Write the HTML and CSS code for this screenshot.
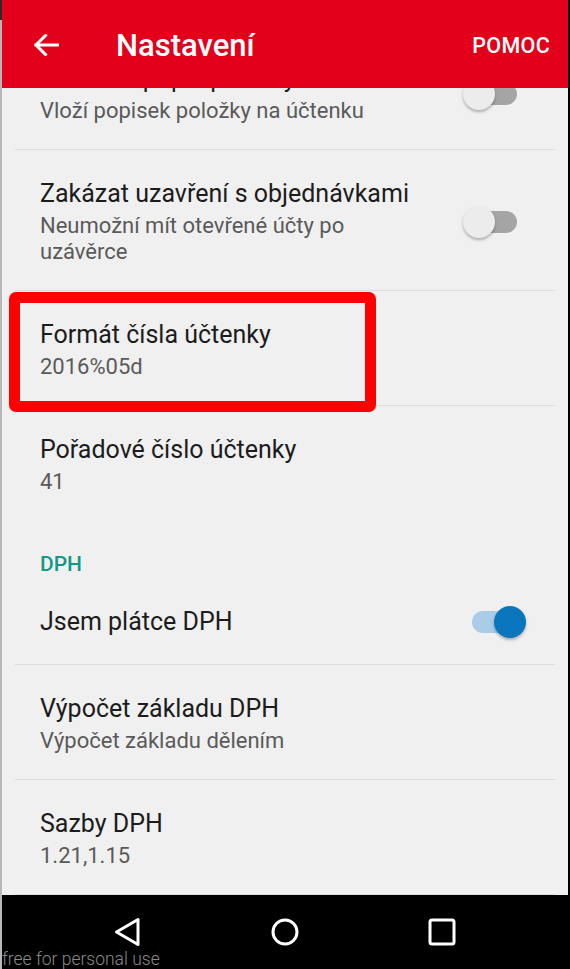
FILE: index.html
```html
<!DOCTYPE html>
<html lang="cs">
<head>
    <meta charset="UTF-8">
    <meta name="viewport" content="width=device-width, initial-scale=1.0">
    <title>Nastavení</title>
    <link rel="stylesheet" href="styles.css">
</head>
<body>
    <div class="screen">
        <div class="edge-left"></div>
        <div class="phone">
            <div class="appbar">
                <svg class="back" width="26" height="22" viewBox="0 0 26 22">
                    <path d="M3 11 H25 M12.5 1.5 L3 11 L12.5 20.5" fill="none" stroke="#fff" stroke-width="3" stroke-linecap="square"/>
                </svg>
                <div class="title">Nastavení</div>
                <div class="action">POMOC</div>
            </div>

            <div class="content">
                <div class="list">
                    <div class="pref">
                        <div class="pref-text">
                            <div class="pref-title">Tisknout popis položky v účtence</div>
                            <div class="pref-summary">Vloží popisek položky na účtenku</div>
                        </div>
                        <div class="switch"><div class="switch-track"></div><div class="switch-thumb"></div></div>
                    </div>
                    <div class="pref">
                        <div class="pref-text">
                            <div class="pref-title">Zakázat uzavření s objednávkami</div>
                            <div class="pref-summary">Neumožní mít otevřené účty po uzávěrce</div>
                        </div>
                        <div class="switch"><div class="switch-track"></div><div class="switch-thumb"></div></div>
                    </div>
                    <div class="pref">
                        <div class="pref-text">
                            <div class="pref-title">Formát čísla účtenky</div>
                            <div class="pref-summary">2016%05d</div>
                        </div>
                        <div class="highlight"></div>
                    </div>
                    <div class="pref group-end">
                        <div class="pref-text">
                            <div class="pref-title">Pořadové číslo účtenky</div>
                            <div class="pref-summary">41</div>
                        </div>
                    </div>

                    <div class="category">DPH</div>

                    <div class="pref single">
                        <div class="pref-text">
                            <div class="pref-title">Jsem plátce DPH</div>
                        </div>
                        <div class="switch on"><div class="switch-track"></div><div class="switch-thumb"></div></div>
                    </div>
                    <div class="pref">
                        <div class="pref-text">
                            <div class="pref-title">Výpočet základu DPH</div>
                            <div class="pref-summary">Výpočet základu dělením</div>
                        </div>
                    </div>
                    <div class="pref">
                        <div class="pref-text">
                            <div class="pref-title">Sazby DPH</div>
                            <div class="pref-summary">1.21,1.15</div>
                        </div>
                    </div>
                </div>
            </div>

            <div class="navbar">
                <svg class="nav-icon" width="40" height="40" viewBox="0 0 40 40">
                    <path d="M8.5 20 L30 7.5 V32.5 Z" fill="none" stroke="#fff" stroke-width="3" stroke-linejoin="round"/>
                </svg>
                <svg class="nav-icon" width="40" height="40" viewBox="0 0 40 40">
                    <circle cx="20" cy="20" r="12" fill="none" stroke="#fff" stroke-width="3"/>
                </svg>
                <svg class="nav-icon" width="40" height="40" viewBox="0 0 40 40">
                    <rect x="8" y="8" width="24" height="24" rx="2" fill="none" stroke="#fff" stroke-width="3"/>
                </svg>
                <div class="watermark">free for personal use</div>
            </div>
        </div>
        <div class="edge-right"></div>
    </div>
</body>
</html>
```

FILE: styles.css
```css
body {
    margin: 0;
    width: 570px;
    height: 969px;
    overflow: hidden;
    font-family: Roboto, "Noto Sans", sans-serif;
}
.screen {
    display: flex;
    height: 969px;
}
.edge-left {
    width: 2px;
    background: linear-gradient(#2a2a2a 0 20px, #b8b8b8 20px);
}
.edge-right {
    width: 2px;
    background: #000;
}
.phone {
    flex: 1;
    min-width: 0;
    display: flex;
    flex-direction: column;
}
.appbar {
    height: 88px;
    flex-shrink: 0;
    display: flex;
    align-items: center;
    padding: 0 18px 0 31px;
    background: #e2001a;
    color: #fff;
}
.back {
    flex-shrink: 0;
    margin-top: 2px;
}
.title {
    flex: 1;
    margin-left: 57px;
    font-size: 31px;
    font-weight: 500;
    margin-top: 2px;
}
.action {
    font-size: 21.5px;
    font-weight: 500;
    letter-spacing: 0.3px;
    margin-top: 2px;
}
.content {
    flex: 1;
    overflow: hidden;
    padding: 0 13px;
    background: #f0f0f0;
}
.list {
    margin-top: -53px;
}
.pref {
    position: relative;
    display: flex;
    align-items: center;
    padding: 29px 29px 25px 25px;
    border-bottom: 1px solid #dcdcdc;
}
.pref.single {
    padding: 26px 29px 26px 25px;
}
.pref.group-end {
    padding-bottom: 26px;
    border-bottom: none;
}
.pref-text {
    flex: 1;
    min-width: 0;
}
.pref-title {
    font-size: 25px;
    line-height: 30px;
    color: #1c1c1c;
    white-space: nowrap;
}
.pref-summary {
    margin-top: 4px;
    font-size: 22px;
    line-height: 26px;
    color: #5a5a5a;
}
.category {
    padding: 32px 25px 5px;
    font-size: 21px;
    line-height: 22px;
    font-weight: 500;
    color: #12998a;
}
.switch {
    position: relative;
    flex-shrink: 0;
    width: 63px;
    height: 32px;
    margin-left: 43px;
}
.switch-track {
    position: absolute;
    left: 9px;
    right: 9px;
    top: 5px;
    height: 22px;
    border-radius: 11px;
    background: #a5a5a5;
}
.switch-thumb {
    position: absolute;
    top: 0;
    left: 0;
    width: 32px;
    height: 32px;
    border-radius: 50%;
    background: #ececec;
    box-shadow: 0 2px 3px rgba(0, 0, 0, 0.28);
}
.switch.on .switch-track {
    background: #a9cde6;
}
.switch.on .switch-thumb {
    left: 31px;
    background: #0a76bd;
}
.highlight {
    position: absolute;
    left: -6px;
    top: 1px;
    width: 367px;
    height: 120px;
    box-sizing: border-box;
    border: 11px solid #ff0000;
    border-radius: 7px;
    pointer-events: none;
}
.navbar {
    position: relative;
    height: 74px;
    flex-shrink: 0;
    display: flex;
    justify-content: center;
    align-items: center;
    gap: 117px;
    background: #000;
}
.nav-icon {
    display: block;
}
.watermark {
    position: absolute;
    left: 0;
    bottom: 0;
    font-size: 17.5px;
    line-height: 20px;
    font-weight: 300;
    color: #8a8a8a;
}
```
